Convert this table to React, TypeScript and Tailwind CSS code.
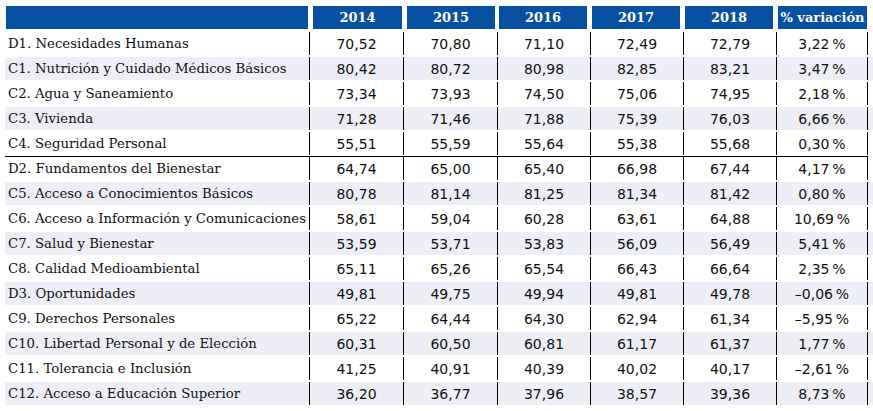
const years = ["2014", "2015", "2016", "2017", "2018", "% variación"];

// header blue boxes, each with its own offset from the previous one
const headCls = [
  "ml-[5px] w-[89px]",
  "ml-[5px] w-[88px]",
  "ml-[4px] w-[88px]",
  "ml-[5px] w-[88px]",
  "ml-[5px] w-[88px]",
  "ml-[5px] w-[89px]",
];

const cellCls = [
  "w-[94px] border-l border-black",
  "w-[94px] border-l border-black",
  "w-[93px] border-l border-black",
  "w-[93px] border-l border-black",
  "w-[93px] border-l border-black",
  "w-[92px] border-x border-black",
];

type Row = [string, string, string, string, string, string, string];

const sections: Row[][] = [
  [
    ["D1. Necesidades Humanas", "70,52", "70,80", "71,10", "72,49", "72,79", "3,22\u2009%"],
    ["C1. Nutrición y Cuidado Médicos Básicos", "80,42", "80,72", "80,98", "82,85", "83,21", "3,47\u2009%"],
    ["C2. Agua y Saneamiento", "73,34", "73,93", "74,50", "75,06", "74,95", "2,18\u2009%"],
    ["C3. Vivienda", "71,28", "71,46", "71,88", "75,39", "76,03", "6,66\u2009%"],
    ["C4. Seguridad Personal", "55,51", "55,59", "55,64", "55,38", "55,68", "0,30\u2009%"],
  ],
  [
    ["D2. Fundamentos del Bienestar", "64,74", "65,00", "65,40", "66,98", "67,44", "4,17\u2009%"],
    ["C5. Acceso a Conocimientos Básicos", "80,78", "81,14", "81,25", "81,34", "81,42", "0,80\u2009%"],
    ["C6. Acceso a Información y Comunicaciones", "58,61", "59,04", "60,28", "63,61", "64,88", "10,69\u2009%"],
    ["C7. Salud y Bienestar", "53,59", "53,71", "53,83", "56,09", "56,49", "5,41\u2009%"],
    ["C8. Calidad Medioambiental", "65,11", "65,26", "65,54", "66,43", "66,64", "2,35\u2009%"],
    ["D3. Oportunidades", "49,81", "49,75", "49,94", "49,81", "49,78", "–0,06\u2009%"],
    ["C9. Derechos Personales", "65,22", "64,44", "64,30", "62,94", "61,34", "–5,95\u2009%"],
    ["C10. Libertad Personal y de Elección", "60,31", "60,50", "60,81", "61,17", "61,37", "1,77\u2009%"],
    ["C11. Tolerancia e Inclusión", "41,25", "40,91", "40,39", "40,02", "40,17", "–2,61\u2009%"],
    ["C12. Acceso a Educación Superior", "36,20", "36,77", "37,96", "38,57", "39,36", "8,73\u2009%"],
  ],
];

const DataRow = ({ row, shaded }: { row: Row; shaded: boolean }) => {
  const [label, ...values] = row;
  return (
    <div className={`flex h-[23px] ${shaded ? "bg-[#eeeef6]" : "bg-white"}`}>
      <div className="w-[304px] pl-[3px] pt-px flex items-center font-['DejaVu_Serif',serif] text-[13.25px] text-[#111] whitespace-nowrap">
        {label}
      </div>
      {values.map((v, i) => (
        <div
          key={i}
          className={`${cellCls[i]} pt-px flex items-center justify-center font-['DejaVu_Sans',sans-serif] text-[14px] text-[#111]`}
        >
          {v}
        </div>
      ))}
    </div>
  );
};

export default function App() {
  return (
    <div className="w-[873px] h-[411px] bg-white pl-[5px] pt-[6px]">
      <div className="flex h-[23px]">
        <div className="ml-[1px] w-[302px] bg-[#0650a1]" />
        {years.map((y, i) => (
          <div
            key={y}
            className={`${headCls[i]} bg-[#0650a1] flex items-center justify-center text-white font-bold font-['DejaVu_Serif',serif] text-[13px]`}
          >
            {y}
          </div>
        ))}
      </div>

      <div className="mt-[3px] flex flex-col gap-[2px]">
        {sections[0].map((r, i) => (
          <DataRow key={r[0]} row={r} shaded={i % 2 === 1} />
        ))}
      </div>
      <div className="mt-[1px] h-px w-[863px] bg-black" />
      <div className="flex flex-col gap-[2px]">
        {sections[1].map((r, i) => (
          <DataRow key={r[0]} row={r} shaded={i % 2 === 1} />
        ))}
      </div>
    </div>
  );
}
